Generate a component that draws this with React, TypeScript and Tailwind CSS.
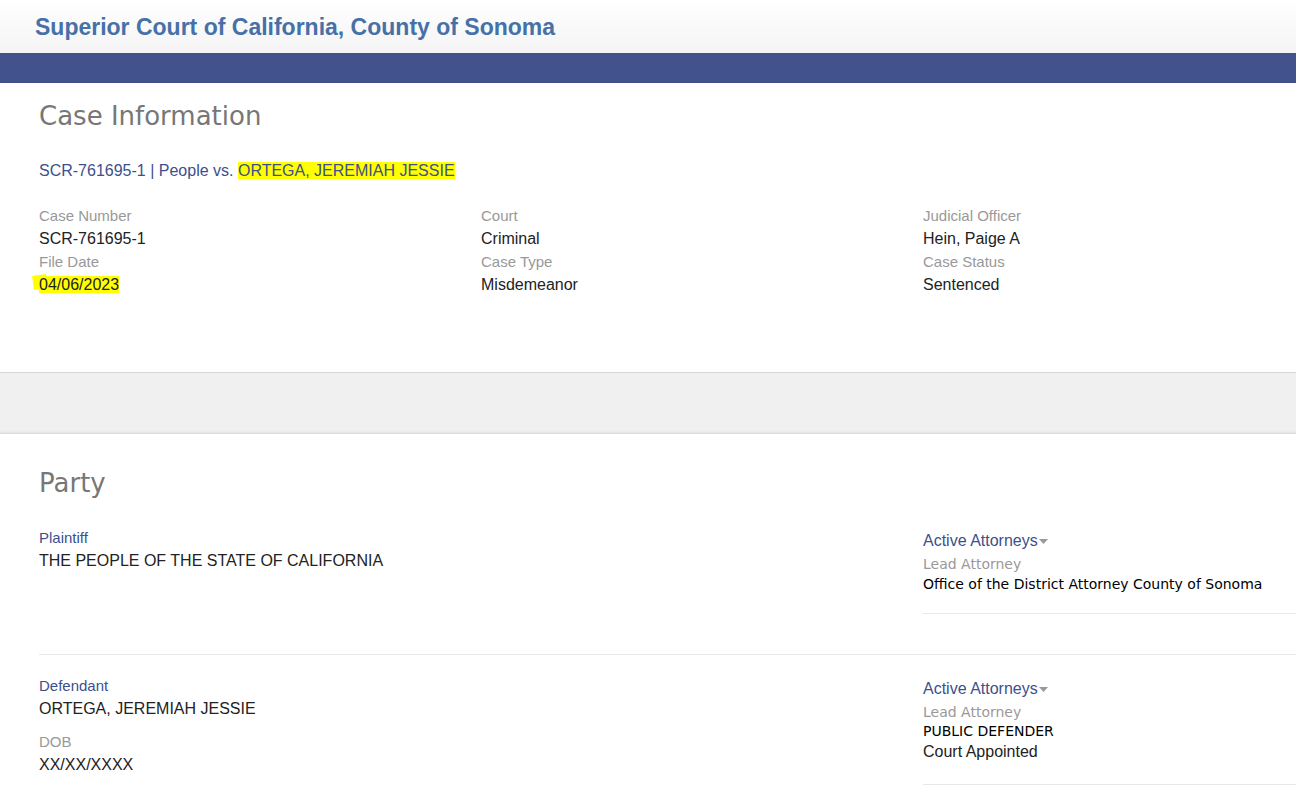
import React from 'react'

const arial = { fontFamily: '"Liberation Sans", Arial, sans-serif' }
const dejavu = { fontFamily: '"DejaVu Sans", Verdana, sans-serif' }

function Field({ label, value, highlight }: { label: string; value: string; highlight?: boolean }) {
  return (
    <div>
      <div className="text-[15px] leading-[23px] text-[#999999]">{label}</div>
      <div className="text-[16px] leading-[23px] text-[#222222]">
        {highlight ? <span className="relative">
          <span className="absolute -left-[6px] -top-[1px] h-[14px] w-[14px] -rotate-[8deg] bg-[#ffff00]" />
          <span className="relative bg-[#ffff00] leading-[16px]">{value}</span>
        </span> : value}
      </div>
    </div>
  )
}

function Attorneys({ children }: { children: React.ReactNode }) {
  return (
    <div className="w-[373px] shrink-0 border-b border-[#e8e8e8] pt-[3px]">
      <div className="flex items-center text-[16px] leading-[22px] text-[#3d4f8c]">
        Active Attorneys
        <svg width="10" height="6" viewBox="0 0 10 6" className="ml-[1px] mt-[1px]">
          <path d="M0 0 H9 L4.5 5 Z" fill="#999999" />
        </svg>
      </div>
      {children}
    </div>
  )
}

export default function App() {
  return (
    <div className="min-h-screen bg-white" style={arial}>
      <header className="h-[53px] bg-gradient-to-b from-white to-[#f4f4f4] pl-[35px] pt-[13px]">
        <h1 className="text-[23px] font-bold leading-[28px] text-[#4670a8]">Superior Court of California, County of Sonoma</h1>
      </header>
      <div className="h-[30px] bg-[#41528c]" />

      <section className="h-[290px] border-b border-[#d6d6d6] bg-white pl-[39px] pt-[17px] shadow-[0_1px_3px_rgba(0,0,0,0.12)]">
        <h2 className="text-[26px] leading-[32px] text-[#777777]" style={dejavu}>Case Information</h2>
        <div className="mt-[30px] text-[16px] leading-[18px] text-[#3d4f8c]">
          SCR-761695-1 | People vs. <span className="bg-[#ffff00]">ORTEGA, JEREMIAH JESSIE</span>
        </div>
        <div className="mt-[24px] flex">
          <div className="w-[442px] shrink-0">
            <Field label="Case Number" value="SCR-761695-1" />
            <Field label="File Date" value="04/06/2023" highlight />
          </div>
          <div className="w-[442px] shrink-0">
            <Field label="Court" value="Criminal" />
            <Field label="Case Type" value="Misdemeanor" />
          </div>
          <div className="w-[373px] shrink-0">
            <Field label="Judicial Officer" value="Hein, Paige A" />
            <Field label="Case Status" value="Sentenced" />
          </div>
        </div>
      </section>

      <div className="h-[60px] bg-[#f0f0f0]" />

      <section className="border-t border-[#dcdcdc] bg-white pl-[39px] pt-[33px] shadow-[0_-1px_2px_rgba(0,0,0,0.06)]">
        <h2 className="text-[26px] leading-[32px] text-[#777777]" style={dejavu}>Party</h2>

        <div className="mt-[28px] flex border-b border-[#e8e8e8] pb-[40px]">
          <div className="w-[884px] shrink-0">
            <div className="text-[15px] leading-[22px] text-[#3d4f8c]">Plaintiff</div>
            <div className="text-[16px] leading-[24px] text-[#222222]">THE PEOPLE OF THE STATE OF CALIFORNIA</div>
          </div>
          <Attorneys>
            <div className="pb-[21px]" style={dejavu}>
              <div className="text-[14px] leading-[24px] text-[#999999]">Lead Attorney</div>
              <div className="text-[14px] leading-[16px] text-black">Office of the District Attorney County of Sonoma</div>
            </div>
          </Attorneys>
        </div>

        <div className="mt-[20px] flex">
          <div className="w-[884px] shrink-0">
            <div className="text-[15px] leading-[22px] text-[#3d4f8c]">Defendant</div>
            <div className="text-[16px] leading-[24px] text-[#222222]">ORTEGA, JEREMIAH JESSIE</div>
            <div className="mt-[10px] text-[15px] leading-[22px] text-[#999999]">DOB</div>
            <div className="text-[16px] leading-[24px] text-[#222222]">XX/XX/XXXX</div>
          </div>
          <Attorneys>
            <div className="pb-[22px]">
              <div className="text-[14px] leading-[24px] text-[#999999]" style={dejavu}>Lead Attorney</div>
              <div className="text-[14px] leading-[14px] text-black" style={dejavu}>PUBLIC DEFENDER</div>
              <div className="mt-[4px] text-[16px] leading-[20px] text-[#222222]">Court Appointed</div>
            </div>
          </Attorneys>
        </div>
      </section>
    </div>
  )
}
